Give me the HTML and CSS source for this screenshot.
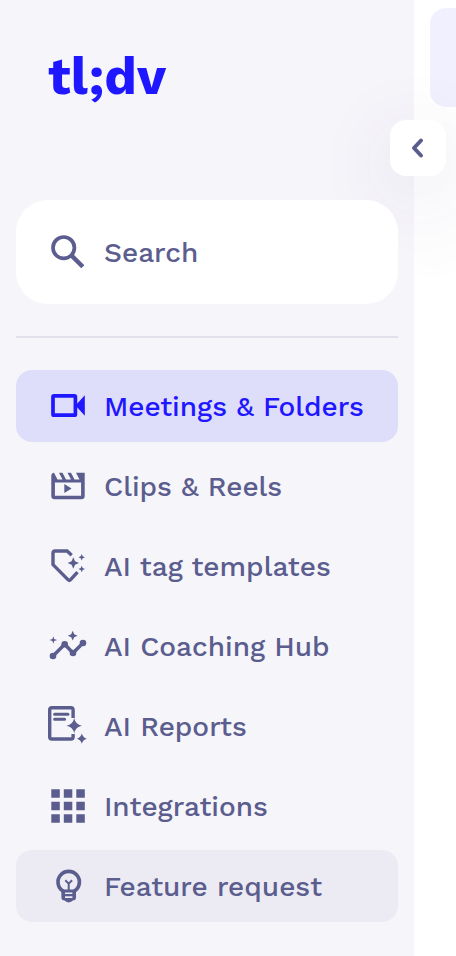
FILE: index.html
```
<!DOCTYPE html>
<html lang="en">
<head>
    <meta charset="UTF-8">
    <meta name="viewport" content="width=device-width, initial-scale=1.0">
    <title>tl;dv</title>
    <link rel="stylesheet" href="styles.css">
</head>
<body>
    <aside class="sidebar">
        <a href="#" class="logo">tl;dv</a>
        <button type="button" class="collapse" aria-label="Collapse sidebar">
            <svg viewBox="0 0 24 24"><path d="M15 4.5L8 12L15 19.5"/></svg>
        </button>
        <label class="search">
            <svg class="icon" viewBox="0 0 40 40">
                <circle class="line thick" cx="15.7" cy="15.7" r="10.7"/>
                <path class="line thicker" d="M23.4 23.4L34.8 34.8"/>
            </svg>
            <input type="search" placeholder="Search" aria-label="Search">
        </label>
        <hr>
        <nav>
            <a href="#" class="active">
                <svg class="icon" viewBox="0 0 40 40">
                    <rect class="line thick" x="5" y="9.9" width="22.4" height="19.3" rx="1"/>
                    <path d="M27.5 19.5L36.8 9.2V29.8Z"/>
                </svg>
                <span>Meetings &amp; Folders</span>
            </a>
            <a href="#">
                <svg class="icon" viewBox="0 0 40 40">
                    <path fill-rule="evenodd" d="M6 6.7L9.5 13.4H14.5L11 6.7H14.5L18 13.4H23L19.5 6.7H23L26.5 13.4H31.5L28 6.7H36.7V30Q36.7 33.3 33.4 33.3H6.6Q3.3 33.3 3.3 30V10Q3.3 7 6 6.7ZM6.9 16.6V29.8H33.1V16.6Z"/>
                    <path d="M16.3 18L23.6 22.5L16.3 27Z"/>
                </svg>
                <span>Clips &amp; Reels</span>
            </a>
            <a href="#">
                <svg class="icon" viewBox="0 0 40 40">
                    <path class="line" d="M23.7 9.2L19.1 5H7Q5 5 5 7V18.6L20.2 33.9Q21.3 35 22.4 33.9L29.5 26.1"/>
                    <path d="M25.3 11.3L27 15.3L31 17L27 18.7L25.3 22.7L23.6 18.7L19.6 17L23.6 15.3Z"/>
                    <path d="M33.7 8L34.7 10.3L37 11.3L34.7 12.3L33.7 14.6L32.7 12.3L30.4 11.3L32.7 10.3Z"/>
                    <path d="M33.7 19.7L34.7 22L37 23L34.7 24L33.7 26.3L32.7 24L30.4 23L32.7 22Z"/>
                </svg>
                <span>AI tag templates</span>
            </a>
            <a href="#">
                <svg class="icon" viewBox="0 0 40 40">
                    <path class="line" d="M5 30L16.7 18.3L25 27L35 17"/>
                    <circle cx="5" cy="30" r="3.3"/>
                    <circle cx="16.7" cy="18.3" r="3.3"/>
                    <circle cx="25" cy="27" r="3.3"/>
                    <circle cx="35" cy="17" r="3.3"/>
                    <path d="M24.7 4.8L26.2 8.2L29.6 9.7L26.2 11.2L24.7 14.6L23.2 11.2L19.8 9.7L23.2 8.2Z"/>
                    <path d="M5.3 10.2L6.2 13.1L9.1 14L6.2 14.9L5.3 17.8L4.4 14.9L1.5 14L4.4 13.1Z"/>
                </svg>
                <span>AI Coaching Hub</span>
            </a>
            <a href="#">
                <svg class="icon" viewBox="0 0 40 40">
                    <path class="line" d="M25.1 12V3.7Q25.1 1.7 23.1 1.7H3.7Q1.7 1.7 1.7 3.7V31Q1.7 33 3.7 33H23.1Q25.1 33 25.1 31V28"/>
                    <path class="line round" d="M6.6 8.3H20M6.6 13.3H16.6"/>
                    <path d="M26.2 12Q27.4 18.5 33.8 19.7Q27.4 20.9 26.2 27.4Q25 20.9 18.6 19.7Q25 18.5 26.2 12Z"/>
                    <path d="M33.8 27.6Q34.8 31.7 38.8 32.7Q34.8 33.7 33.8 37.8Q32.8 33.7 28.8 32.7Q32.8 31.7 33.8 27.6Z"/>
                </svg>
                <span>AI Reports</span>
            </a>
            <a href="#">
                <svg class="icon" viewBox="0 0 40 40">
                    <path d="M3.3 3.3h8.5v8.5h-8.5zM15.8 3.3h8.5v8.5h-8.5zM28.3 3.3h8.5v8.5h-8.5zM3.3 15.8h8.5v8.5h-8.5zM15.8 15.8h8.5v8.5h-8.5zM28.3 15.8h8.5v8.5h-8.5zM3.3 28.3h8.5v8.5h-8.5zM15.8 28.3h8.5v8.5h-8.5zM28.3 28.3h8.5v8.5h-8.5z"/>
                </svg>
                <span>Integrations</span>
            </a>
            <a href="#" class="hovered">
                <svg class="icon" viewBox="0 0 40 40">
                    <path class="line thick" d="M15.2 25.2A10.7 10.7 0 1 1 26.2 25.2"/>
                    <path fill-rule="evenodd" d="M13.4 23.5H28V31.5Q28 34.3 24.8 34.6Q23.5 36.4 20.7 36.4Q17.9 36.4 16.6 34.6Q13.4 34.3 13.4 31.5ZM17 26.4V28.1H24.4V26.4ZM17 30.3V32H24.4V30.3Z"/>
                    <path class="line thin" d="M17.3 14.3L20.7 17.7L24.1 14.3M20.7 17.7V24"/>
                </svg>
                <span>Feature request</span>
            </a>
        </nav>
    </aside>
    <main>
        <div class="banner"></div>
        <div class="toolbar"></div>
    </main>
</body>
</html>
```
FILE: styles.css
```
* {
    box-sizing: border-box;
}
body {
    display: flex;
    min-height: 100vh;
    margin: 0;
    font-family: "Work Sans", "Open Sans", sans-serif;
    font-size: 28px;
    font-weight: 500;
    color: #5b5d8e;
    background-color: #fff;
}
.sidebar {
    position: relative;
    z-index: 1;
    flex: none;
    width: calc(100% - 42px);
    max-width: 414px;
    padding: 40px 16px 32px;
    background-color: #f6f5fa;
}
.logo {
    display: block;
    height: 160px;
    padding-left: 32px;
    font-size: 52px;
    font-weight: 700;
    line-height: 74px;
    color: #1f17ff;
    text-decoration: none;
}
.collapse {
    position: absolute;
    top: 120px;
    right: -32px;
    display: flex;
    align-items: center;
    justify-content: center;
    width: 56px;
    height: 56px;
    padding: 0;
    border: 0;
    border-radius: 16px;
    background-color: #fff;
    box-shadow: 0 16px 80px rgba(70, 60, 120, 0.12);
}
.collapse svg {
    width: 24px;
    height: 24px;
    fill: none;
    stroke: #5b5d8e;
    stroke-width: 4;
    stroke-linecap: round;
    stroke-linejoin: round;
}
.search {
    position: relative;
    display: flex;
    align-items: center;
    gap: 16px;
    height: 104px;
    padding: 0 32px;
    border-radius: 32px;
    background-color: #fff;
}
.search input {
    flex: 1;
    min-width: 0;
    padding: 0;
    border: 0;
    outline: none;
    font: inherit;
    color: inherit;
    background: none;
}
.search input::placeholder {
    color: inherit;
    opacity: 1;
}
hr {
    height: 2px;
    margin: 32px 0;
    border: 0;
    background-color: #e1e0ec;
}
nav {
    display: flex;
    flex-direction: column;
    gap: 8px;
}
nav a {
    display: flex;
    align-items: center;
    gap: 16px;
    height: 72px;
    padding-left: 32px;
    border-radius: 16px;
    color: inherit;
    text-decoration: none;
    white-space: nowrap;
}
nav a.active {
    color: #1f17ff;
    background-color: #dfdefa;
}
nav a.hovered {
    background-color: #ecebf3;
}
.icon {
    flex: none;
    width: 40px;
    height: 40px;
    fill: currentColor;
}
.line {
    fill: none;
    stroke: currentColor;
    stroke-width: 3.4;
}
.thick {
    stroke-width: 3.7;
}
.thicker {
    stroke-width: 4.4;
}
.thin {
    stroke-width: 2;
}
.round {
    stroke-width: 3;
    stroke-linecap: round;
}
main {
    flex: 1;
    overflow: hidden;
    padding-top: 8px;
}
.banner {
    height: 99px;
    margin-left: 16px;
    border-radius: 16px 0 0 16px;
    background-color: #f1f0fe;
}
.toolbar {
    height: 136px;
    margin-top: 16px;
    background-color: #fdfdfe;
    box-shadow: 0 8px 32px rgba(0, 0, 0, 0.02);
}
```
